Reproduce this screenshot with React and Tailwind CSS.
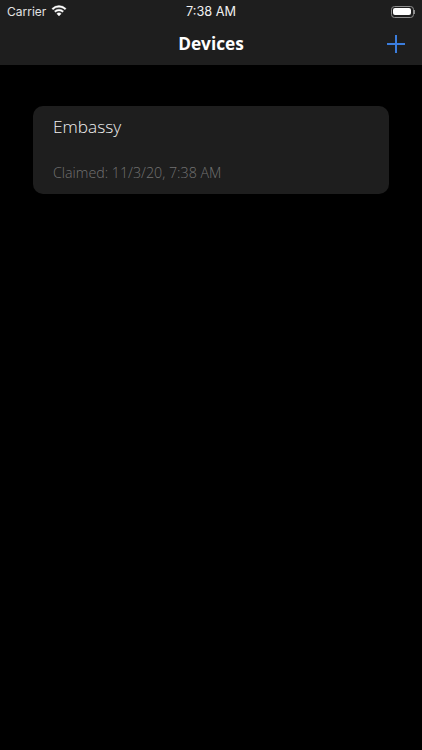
import React from 'react';

function Wifi() {
  return (
    <svg width="16" height="12" viewBox="0 0 16 12" fill="#fff" stroke="#fff" strokeWidth="0.4" className="ml-[5px] -mt-[1px]">
      <path d="M8 2.3c2.3 0 4.4.9 6 2.4l1.1-1.2A10.3 10.3 0 0 0 8 .6 10.3 10.3 0 0 0 .9 3.5L2 4.7a8.6 8.6 0 0 1 6-2.4z" />
      <path d="M8 5.9c1.3 0 2.5.5 3.4 1.3l1.2-1.2A6.7 6.7 0 0 0 8 4.2 6.7 6.7 0 0 0 3.4 6l1.2 1.2c.9-.8 2.1-1.3 3.4-1.3z" />
      <path d="M8 7.8c-.9 0-1.7.3-2.2.9L8 11l2.2-2.3c-.5-.6-1.3-.9-2.2-.9z" />
    </svg>
  );
}

function Battery() {
  return (
    <div className="flex items-center">
      <div className="w-[23px] h-[12px] rounded-[3.5px] border border-[#8e8e8e] p-[1.5px]">
        <div className="w-full h-full rounded-[2px] bg-white" />
      </div>
      <div className="w-[1px] h-[4px] bg-[#8e8e8e] ml-[0.5px]" />
    </div>
  );
}

export default function App() {
  return (
    <div className="w-[422px] h-[750px] bg-black overflow-hidden font-['Open_Sans',sans-serif]">
      <header className="h-[65px] bg-[#1e1e1e]">
        <div className="h-[22px] grid grid-cols-3 items-center pl-[7px] pr-[7px] pt-[1px] text-white">
          <div className="flex items-center text-[12px] text-[#e2e2e2] font-['Inter',sans-serif]">
            Carrier
            <Wifi />
          </div>
          <div className="text-center text-[12.75px] font-normal text-[#f0f0f0] font-['Inter',sans-serif]">7:38 AM</div>
          <div className="flex justify-end">
            <Battery />
          </div>
        </div>
        <div className="h-[43px] grid grid-cols-3 items-center pr-[16px] pl-[16px]">
          <div />
          <h1 className="text-center text-[17.25px] font-bold text-white leading-none whitespace-nowrap">Devices</h1>
          <div className="flex justify-end">
            <svg width="20" height="20" viewBox="0 0 20 20" stroke="#3b7ddd" strokeWidth="2" fill="none">
              <path d="M10 1v18M1 10h18" />
            </svg>
          </div>
        </div>
      </header>
      <main className="pt-[41px] px-[33px]">
        <div className="h-[88px] rounded-[10px] bg-[#1e1e1e] pl-[20px] pt-[9px]">
          <div className="text-[17.25px] font-light leading-[24px] text-[#f0f0f0]">Embassy</div>
          <div className="mt-[24px] text-[14.25px] font-light leading-[20px] text-[#727272]">Claimed: 11/3/20, 7:38 AM</div>
        </div>
      </main>
    </div>
  );
}
